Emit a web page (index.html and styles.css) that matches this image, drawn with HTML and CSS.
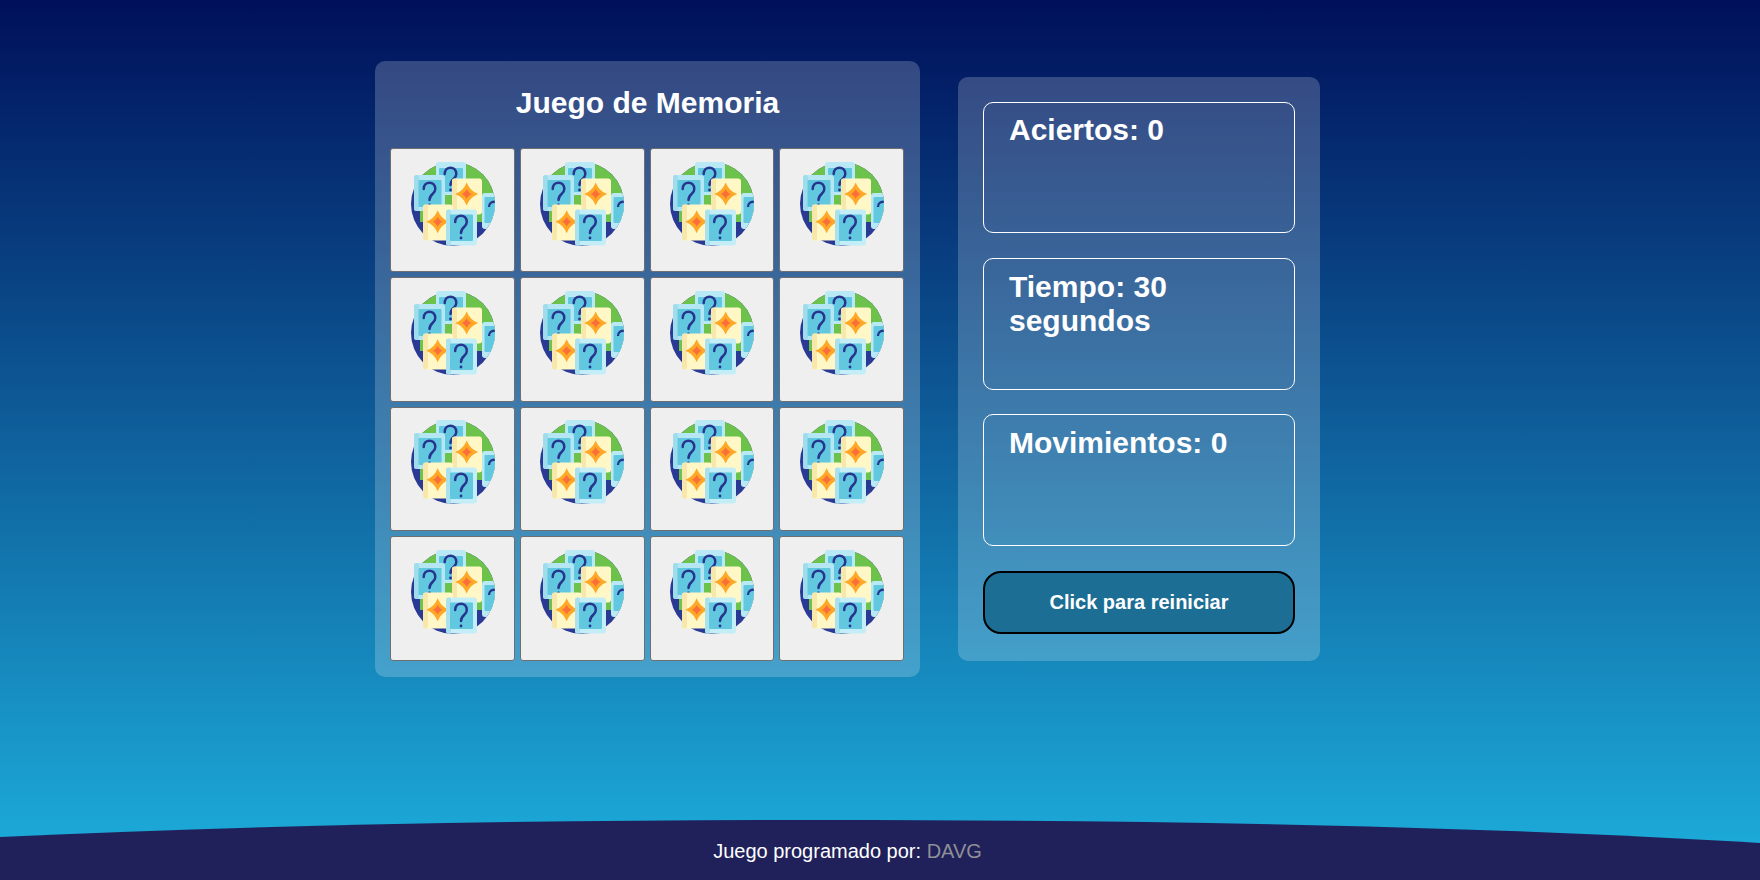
FILE: index.html
```html
<!DOCTYPE html>
<html lang="es">
<head>
<meta charset="utf-8">
<title>Juego de Memoria</title>
<link rel="stylesheet" href="styles.css">
</head>
<body>
<svg class="defs" width="0" height="0" aria-hidden="true">
  <defs>
    <clipPath id="disc"><circle cx="58" cy="49" r="42"/></clipPath>
    <g id="q">
      <path d="M-5.800 -6 C-5.800 -14.500 5.800 -14.500 5.800 -6 C5.800 -0.500 0 -1.500 0 5" fill="none" stroke="#27358f" stroke-width="2.500" stroke-linecap="round"/>
      <circle cx="0" cy="10" r="1.400" fill="#27358f"/>
    </g>
    <g id="star">
      <path d="M0 -11.500 C2.500 -5.500 5.500 -2.500 11.500 0 C5.500 2.500 2.500 5.500 0 11.500 C-2.500 5.500 -5.500 2.500 -11.500 0 C-5.500 -2.500 -2.500 -5.500 0 -11.500Z" fill="#ffa726"/>
      <path d="M0 -5 C1 -2.500 2.500 -1 5 0 C2.500 1 1 2.500 0 5 C-1 2.500 -2.500 1 -5 0 C-2.500 -1 -1 -2.500 0 -5Z" fill="#fb6d3a"/>
    </g>
    <symbol id="memory-icon" viewBox="0 0 110 100">
      <g clip-path="url(#disc)">
        <rect x="10" y="0" width="100" height="100" fill="#2a3a94"/>
        <path d="M25 0H110V38H100V67H25Z" fill="#6cc24a"/>
        <rect x="87" y="38" width="20" height="36" rx="3" fill="#b9e9f5"/>
        <rect x="89.500" y="42" width="20" height="26" rx="1" fill="#62c8e0"/>
        <path d="M94 52 C94 45 104 45 104 52" fill="none" stroke="#27358f" stroke-width="2.300"/>
      </g>
      <rect x="41" y="7" width="30" height="33" rx="3" fill="#b9e9f5"/>
      <rect x="44" y="13" width="24" height="24" rx="1" fill="#62c8e0"/>
      <use href="#q" x="55.500" y="25"/>
      <rect x="19" y="20" width="31" height="36" rx="3" fill="#b4e6f3"/>
      <rect x="19" y="20" width="5" height="36" rx="2.500" fill="#9fdcec"/>
      <rect x="23.500" y="25" width="23" height="27" rx="1" fill="#62c8e0"/>
      <use href="#q" x="34.500" y="40"/>
      <rect x="57" y="23.500" width="30" height="36" rx="3" fill="#fff8c6"/>
      <rect x="57" y="23.500" width="5" height="36" rx="2.500" fill="#f8e7ab"/>
      <use href="#star" x="71.700" y="39"/>
      <rect x="28" y="49.500" width="30" height="36" rx="3" fill="#fff8c6"/>
      <rect x="28" y="49.500" width="5" height="36" rx="2.500" fill="#f8e7ab"/>
      <use href="#star" x="42.700" y="66.700"/>
      <rect x="51" y="54.500" width="31" height="36" rx="3" fill="#c3edf7"/>
      <rect x="51" y="54.500" width="5" height="36" rx="2.500" fill="#a9e1ef"/>
      <rect x="55" y="59.500" width="23" height="26.500" rx="1" fill="#62c8e0"/>
      <use href="#q" x="66" y="73"/>
    </symbol>
  </defs>
</svg>
<div class="page">
  <main class="game">
    <section class="board-panel">
      <h1 class="title">Juego de Memoria</h1>
      <div class="board">
        <button class="card"><svg class="icon"><use href="#memory-icon"/></svg></button>
        <button class="card"><svg class="icon"><use href="#memory-icon"/></svg></button>
        <button class="card"><svg class="icon"><use href="#memory-icon"/></svg></button>
        <button class="card"><svg class="icon"><use href="#memory-icon"/></svg></button>
        <button class="card"><svg class="icon"><use href="#memory-icon"/></svg></button>
        <button class="card"><svg class="icon"><use href="#memory-icon"/></svg></button>
        <button class="card"><svg class="icon"><use href="#memory-icon"/></svg></button>
        <button class="card"><svg class="icon"><use href="#memory-icon"/></svg></button>
        <button class="card"><svg class="icon"><use href="#memory-icon"/></svg></button>
        <button class="card"><svg class="icon"><use href="#memory-icon"/></svg></button>
        <button class="card"><svg class="icon"><use href="#memory-icon"/></svg></button>
        <button class="card"><svg class="icon"><use href="#memory-icon"/></svg></button>
        <button class="card"><svg class="icon"><use href="#memory-icon"/></svg></button>
        <button class="card"><svg class="icon"><use href="#memory-icon"/></svg></button>
        <button class="card"><svg class="icon"><use href="#memory-icon"/></svg></button>
        <button class="card"><svg class="icon"><use href="#memory-icon"/></svg></button>
      </div>
    </section>
    <aside class="stats-panel">
      <div class="stat">Aciertos: 0</div>
      <div class="stat stat-lower">Tiempo: 30 segundos</div>
      <div class="stat stat-lower">Movimientos: 0</div>
      <button class="restart">Click para reiniciar</button>
    </aside>
  </main>
  <footer class="footer">
    <svg class="wave" viewBox="0 0 1760 60" preserveAspectRatio="none" aria-hidden="true">
      <path d="M0 17 C280 4 560 0 820 0 C1160 0 1480 6 1760 23 V60 H0Z"/>
    </svg>
    <p class="credit">Juego programado por: <span class="author">DAVG</span></p>
  </footer>
</div>
</body>
</html>
```

FILE: styles.css
```css
* { box-sizing: border-box; }
html, body { margin: 0; height: 100%; }
body {
  font-family: "Liberation Sans", Arial, sans-serif;
  color: #fff;
  background: linear-gradient(to bottom, #00105a 0%, #1db0dd 100%);
  overflow: hidden;
}
.defs { position: absolute; }
.page {
  height: 880px;
  display: flex;
  flex-direction: column;
}
.game {
  flex: 1;
  display: flex;
  justify-content: center;
  align-items: flex-start;
  gap: 38px;
  padding: 61px 65px 0 0;
}
.board-panel, .stats-panel {
  background: rgba(255, 255, 255, 0.2);
  border-radius: 10px;
}
.board-panel {
  width: 545px;
  height: 616px;
  padding: 0 15px;
}
.title {
  margin: 0;
  height: 87px;
  padding-top: 25px;
  font-size: 30px;
  line-height: 34px;
  font-weight: 700;
  text-align: center;
}
.board {
  display: grid;
  grid-template-columns: repeat(4, 124.8px);
  grid-auto-rows: 124.4px;
  gap: 5px;
}
.card {
  display: flex;
  align-items: flex-start;
  justify-content: flex-start;
  padding: 0;
  background: #efefef;
  border: 1.5px solid #6e6e6e;
  border-radius: 3px;
  overflow: hidden;
}
.icon {
  display: block;
  flex: none;
  width: 110px;
  height: 100px;
  margin: 5.5px 0 0 3.500px;
}
.stats-panel {
  width: 362px;
  height: 584px;
  margin-top: 16px;
  padding: 25px;
  display: flex;
  flex-direction: column;
  gap: 25px;
}
.stat {
  height: 131px;
  padding: 10px 25px;
  border: 1px solid #fff;
  border-radius: 10px;
  font-size: 30px;
  line-height: 34px;
  font-weight: 700;
}
.stat-lower {
  height: 132px;
  padding-top: 11px;
}
.stat-lower + .stat-lower {
  margin-top: -1px;
}
.restart {
  height: 62.500px;
  background: #1c6e94;
  color: #fff;
  border: 2px solid #000;
  border-radius: 18px;
  font-family: inherit;
  font-size: 20px;
  font-weight: 700;
}
.footer {
  position: relative;
  height: 60px;
}
.wave {
  position: absolute;
  inset: 0;
  width: 100%;
  height: 100%;
  fill: #20215b;
}
.credit {
  position: relative;
  margin: 0;
  padding: 21px 65px 0 0;
  font-size: 20px;
  line-height: 20px;
  text-align: center;
}
.author { color: #8f8f96; }
```
